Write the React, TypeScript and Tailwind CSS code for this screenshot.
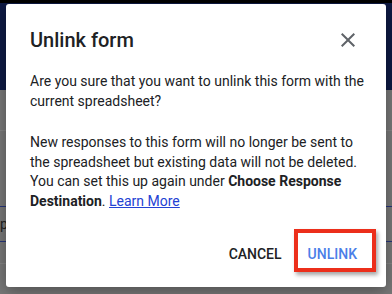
import { X } from "lucide-react";

const CloseIcon = () => (
  <svg viewBox="0 0 24 24" className="w-6 h-6 fill-[#5f6368]">
    <path d="M19 6.41L17.59 5 12 10.59 6.41 5 5 6.41 10.59 12 5 17.59 6.41 19 12 13.41 17.59 19 19 17.59 13.41 12z" />
  </svg>
);

export default function App() {
  void X;
  return (
    <div className="relative w-[392px] h-[294px] overflow-hidden font-['Roboto',sans-serif] bg-[#787878]">
      {/* Page behind the overlay */}
      <div className="flex flex-col h-full">
        <div className="h-[3px] bg-black" />
        <div className="h-[87px] bg-[#0e1a44]" />
        <div className="h-[40px]" />
        <div className="h-px bg-[#848484]" />
        <div className="h-[75px]" />
        <div className="h-px bg-[#27357a]" />
        <div className="h-[34px] flex items-center text-[14px] text-[#222] leading-none">p|</div>
        <div className="h-px bg-[#27357a]" />
        <div className="h-[21px]" />
        <div className="h-px bg-[#848484]" />
      </div>

      {/* Dialog */}
      <div className="absolute left-[6px] top-[4px] w-[380px] h-[283px] bg-white rounded-[3px] shadow-[0_4px_16px_rgba(0,0,0,0.35)] flex flex-col pl-[24px] pt-[22px]">
        <div className="flex items-center justify-between h-[28px] pr-[26px]">
          <h2 className="text-[20px] leading-[28px] font-medium text-[#202124]">Unlink form</h2>
          <button className="flex items-center justify-center">
            <CloseIcon />
          </button>
        </div>

        <p className="mt-[18px] pr-[16px] text-[14px] leading-[19.5px] text-[#202124]">
          Are you sure that you want to unlink this form with the current spreadsheet?
        </p>
        <p className="mt-[22px] pr-[16px] text-[14px] leading-[19.5px] text-[#202124]">
          New responses to this form will no longer be sent to the spreadsheet but existing data will not be
          deleted. You can set this up again under <span className="font-bold">Choose Response Destination</span>.{" "}
          <a className="text-[#2342d3] underline">Learn More</a>
        </p>

        <div className="mt-auto mb-[23px] flex justify-end items-center gap-[26px] pr-[29px]">
          <button className="text-[14px] leading-[20px] font-medium text-[#202124]">CANCEL</button>
          <button className="relative text-[14px] leading-[20px] font-medium text-[#4a7ee8]">
            UNLINK
            <span className="absolute -left-[14px] -right-[19px] -top-[15px] -bottom-[8px] border-[4px] border-[#ec2f1b] shadow-[2px_3px_4px_rgba(0,0,0,0.35)]" />
          </button>
        </div>
      </div>
    </div>
  );
}
